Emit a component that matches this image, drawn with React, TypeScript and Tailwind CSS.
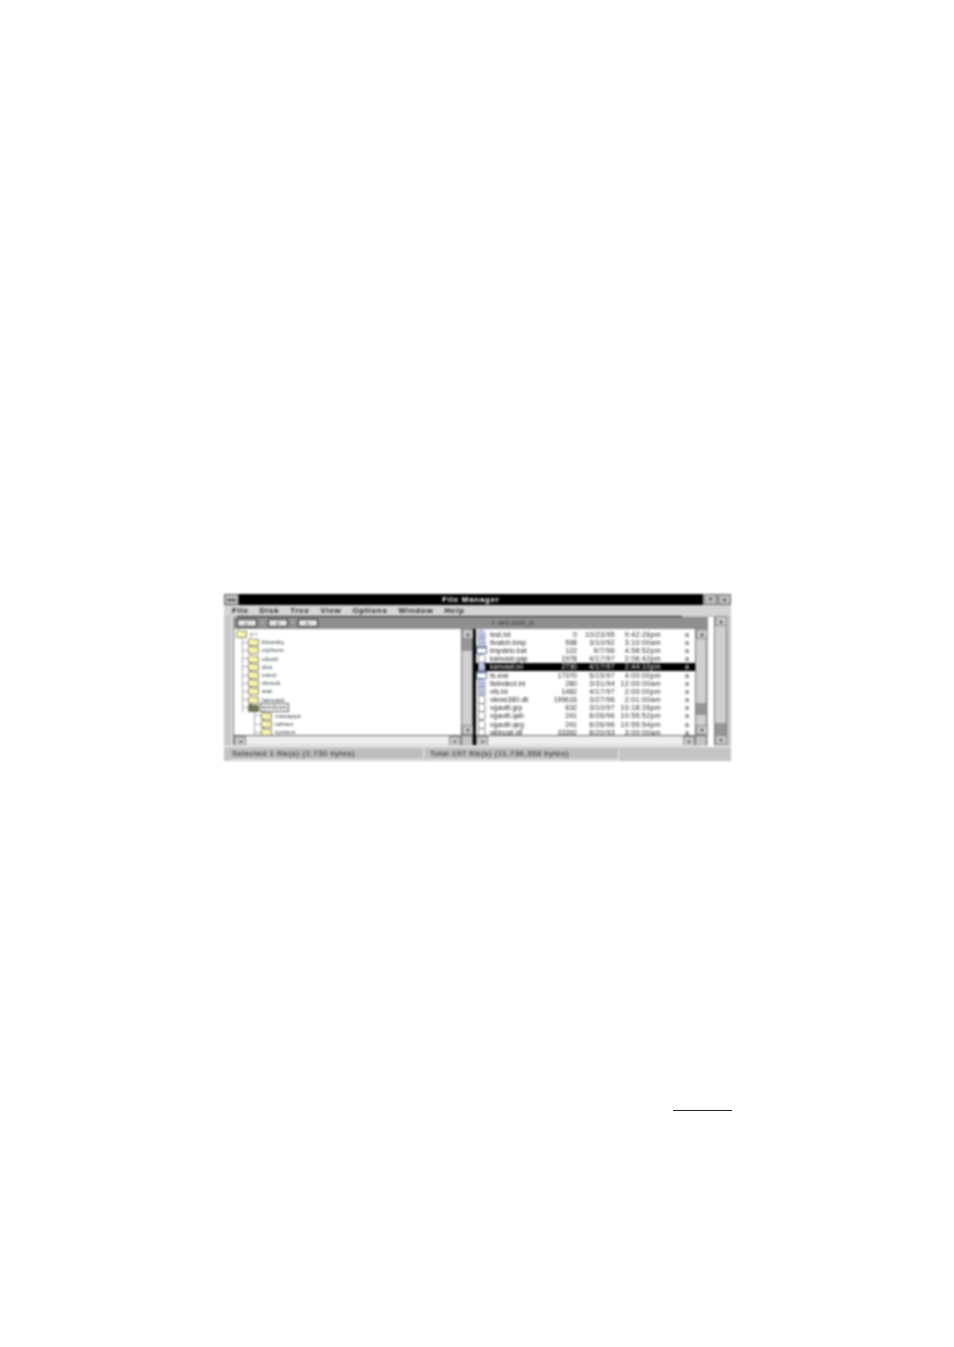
import React from 'react';

const treeRows = [
  { name: 'c:\\', level: 0 },
  { name: 'bluesky', level: 1 },
  { name: 'ciphure', level: 1 },
  { name: 'ubutil', level: 1 },
  { name: 'dos', level: 1 },
  { name: 'ntext', level: 1 },
  { name: 'rbreck', level: 1 },
  { name: 'war', level: 1 },
  { name: 'lamcast', level: 1 },
  { name: 'windows', level: 1, open: true },
  { name: 'mssapps', level: 2 },
  { name: 'rahtex', level: 2 },
  { name: 'system', level: 2 },
];

const fileRows = [
  { icon: 'doc', name: 'test.txt', size: '0', date: '10/23/95', time: '9:42:26pm' },
  { icon: 'doc', name: 'ttvatch.bmp', size: '598', date: '3/10/92', time: '3:10:00am' },
  { icon: 'exe', name: 'tmpdelo.bat', size: '122', date: '9/7/96', time: '4:58:52pm' },
  { icon: 'file', name: 'kanvast.gap', size: '1978', date: '4/17/97', time: '2:06:42pm' },
  { icon: 'doc', name: 'kanvast.ini', size: '2730', date: '4/17/97', time: '2:44:10pm', selected: true },
  { icon: 'exe', name: 'ts.exe', size: '17370', date: '5/15/97', time: '4:00:00pm' },
  { icon: 'doc', name: 'tteindect.ini', size: '280', date: '3/31/94', time: '12:00:00am' },
  { icon: 'doc', name: 'vfs.ini', size: '1482', date: '4/17/97', time: '2:00:00pm' },
  { icon: 'file', name: 'vlews360.dll', size: '199616', date: '3/27/96', time: '2:01:00am' },
  { icon: 'file', name: 'vgautil.grp', size: '632', date: '3/10/97', time: '10:18:26pm' },
  { icon: 'file', name: 'vgautil.qab', size: '241', date: '6/26/96', time: '10:55:52pm' },
  { icon: 'file', name: 'vgautil.qeg', size: '241', date: '6/26/96', time: '10:55:54pm' },
  { icon: 'file', name: 'wbbcall.dll', size: '33392', date: '8/20/93', time: '3:00:00am' },
];

const menus = ['File', 'Disk', 'Tree', 'View', 'Options', 'Window', 'Help'];

const Folder = ({ open }: { open?: boolean }) => (
  <svg width="11" height="8" viewBox="0 0 11 8" className="shrink-0">
    <path d="M0.5 7.5V1.5L1.5 .5H4L5 1.5H10.5V7.5Z" fill={open ? '#6f7350' : '#f8f6b0'} stroke="#55553a" strokeWidth="0.7" />
  </svg>
);

const FileIcon = ({ kind }: { kind: string }) => {
  if (kind === 'exe') {
    return (
      <svg width="11" height="8" viewBox="0 0 11 8" className="shrink-0">
        <rect x="0.5" y="0.5" width="10" height="7" fill="#fff" stroke="#5a6a8a" />
        <rect x="0.5" y="0.5" width="10" height="2" fill="#7c8db0" />
      </svg>
    );
  }
  return (
    <svg width="11" height="9" viewBox="0 0 11 9" className="shrink-0">
      <path d="M2.5 .5H7L9 2.5V8.5H2.5Z" fill={kind === 'doc' ? '#dfe4f2' : '#fff'} stroke={kind === 'doc' ? '#5a6a9a' : '#666'} strokeWidth="0.8" />
      {kind === 'doc' && <path d="M4 3.5H7.5M4 5H7.5M4 6.5H7.5" stroke="#5a6a9a" strokeWidth="0.6" />}
    </svg>
  );
};

const Arrow = ({ dir }: { dir: 'up' | 'down' | 'left' | 'right' }) => {
  const glyph = { up: '▲', down: '▼', left: '◂', right: '▸' }[dir];
  return (
    <div className="w-[12px] h-[10px] shrink-0 flex items-center justify-center bg-[#c6c6c6] border border-[#8c8c8c] text-[5px] leading-none text-[#222]">
      {glyph}
    </div>
  );
};

const VScroll = ({ thumbTop, className, corner }: { thumbTop: number; className: string; corner?: boolean }) => (
  <div className={`flex flex-col shrink-0 bg-[#d0d0d0] border-x border-[#777] ${className}`}>
    <Arrow dir="up" />
    <div className="flex-1 flex flex-col">
      <div style={{ height: thumbTop }} />
      <div className="h-[12px] bg-[#969696]" />
    </div>
    <Arrow dir="down" />
    {corner && <div className="h-[10px] shrink-0 bg-[#c4c4c4] border-t border-[#666]" />}
  </div>
);

const HScroll = () => (
  <div className="h-[10px] flex items-stretch bg-[#eeeeee] border-t border-[#666]">
    <Arrow dir="left" />
    <div className="flex-1" />
    <Arrow dir="right" />
  </div>
);

const Toolbox = ({ label }: { label: string }) => (
  <div className="h-[8px] w-[20px] border border-[#333] bg-[#e2e2e2] text-[5px] leading-[6px] text-center text-[#333]">
    {label}
  </div>
);

export default function App() {
  return (
    <div className="w-[954px] h-[1347px] bg-white overflow-hidden pt-[594px] pl-[224px] font-['Liberation_Sans',Arial,sans-serif]">
      <div className="w-[507px] h-[167px] bg-[#c4c4c4] flex flex-col blur-[0.8px] text-[#333]">
        {/* title bar */}
        <div className="h-[11px] flex shrink-0 items-stretch">
          <div className="w-[15px] bg-[#bdbdbd] border border-[#555] flex items-center justify-center">
            <div className="w-[9px] h-[2px] bg-white border-y border-[#555]" />
          </div>
          <div className="flex-1 bg-black text-white text-[8px] font-bold leading-[11px] text-center tracking-[0.7px]">
            File Manager
          </div>
          <div className="w-[13px] ml-[1px] bg-[#bdbdbd] border border-[#666] text-[6px] leading-[9px] text-center text-[#222]">▾</div>
          <div className="w-[13px] ml-[1px] bg-[#bdbdbd] border border-[#666] text-[6px] leading-[9px] text-center text-[#222]">▴</div>
        </div>

        {/* menu */}
        <div className="h-[11px] shrink-0 flex items-center pl-[8px] gap-[11px] bg-[#d4d4d4] text-[8px] font-bold tracking-[0.7px] text-[#222]">
          {menus.map((m) => (
            <span key={m}>{m}</span>
          ))}
        </div>
        <div className="h-[1px] shrink-0 ml-[13px] mr-[49px] bg-[#222]" />

        <div className="flex-1 flex min-h-0">
          <div className="w-[9px] shrink-0 bg-[#c8c8c8] border-r border-white" />

          {/* child window */}
          <div className="flex-1 flex flex-col min-w-0">
            <div className="h-[12px] shrink-0 w-[475px] flex items-center pl-[4px] bg-[#8f8f8f]">
              <Toolbox label="c:" />
              <span className="w-[11px] text-center text-[5px] text-[#ddd]">a</span>
              <Toolbox label="d:" />
              <span className="w-[10px] text-center text-[5px] text-[#ddd]">b</span>
              <Toolbox label="e:" />
              <span className="ml-[174px] text-[6px] text-[#222] tracking-[0.3px]">f: \MS-DOS_6\</span>
            </div>

            <div className="flex h-[116px] w-[475px]">
              {/* tree */}
              <div className="w-[228px] shrink-0 bg-white flex flex-col overflow-hidden border-l border-[#666]">
                <div className="flex-1 overflow-hidden pt-[1px] pl-[2px]">
                  {treeRows.map((r) => (
                    <div key={r.name} className="h-[8.2px] flex items-center text-[6px] leading-none tracking-[0.3px] text-[#222]">
                      {r.level === 1 && (
                        <div className="w-[12px] h-full shrink-0 pl-[6px]">
                          <div className="h-full flex items-center border-l border-[#aaa]">
                            <div className="w-full h-[1px] bg-[#aaa]" />
                          </div>
                        </div>
                      )}
                      {r.level === 2 && (
                        <div className="w-[25px] h-full shrink-0 pl-[18px]">
                          <div className="h-full flex items-center border-l border-[#aaa]">
                            <div className="w-full h-[1px] bg-[#aaa]" />
                          </div>
                        </div>
                      )}
                      <Folder open={r.open} />
                      <span className={r.open ? 'ml-[1px] px-[1px] border border-[#555] leading-[7px]' : 'ml-[3px]'}>{r.name}</span>
                    </div>
                  ))}
                </div>
                <HScroll />
              </div>
              <VScroll className="w-[12px]" thumbTop={0} corner />
              <div className="w-[3px] shrink-0 bg-black" />

              {/* file list */}
              <div className="w-[219px] shrink-0 bg-white flex flex-col overflow-hidden">
                <div className="flex-1 overflow-hidden pt-[1px]">
                  {fileRows.map((f) => (
                    <div
                      key={f.name}
                      className={`h-[8.2px] flex items-center text-[7px] leading-none ${f.selected ? 'bg-black text-white' : 'text-[#222]'}`}
                    >
                      <FileIcon kind={f.icon} />
                      <span className="w-[60px] ml-[3px] whitespace-nowrap">{f.name}</span>
                      <span className="w-[27px] text-right">{f.size}</span>
                      <span className="w-[38px] text-right tracking-[0.35px]">{f.date}</span>
                      <span className="w-[46px] text-right tracking-[0.35px]">{f.time}</span>
                      <span className="ml-[24px]">a</span>
                    </div>
                  ))}
                </div>
                <HScroll />
              </div>
              <VScroll className="w-[12px]" thumbTop={64} corner />
            </div>
          </div>

          {/* main window scrollbar */}
          <div className="w-[6px] shrink-0 bg-white" />
          <VScroll className="w-[13px] mt-[-1px] mb-[1px]" thumbTop={97} />
          <div className="w-[4px] shrink-0 bg-[#c4c4c4]" />
        </div>

        {/* status bar */}
        <div className="h-[15px] shrink-0 flex items-center gap-[3px] pl-[6px] bg-[#c4c4c4] border-t border-white text-[8px] tracking-[0.45px] text-[#222]">
          <div className="w-[194px] h-[11px] leading-[10px] pl-[2px] border-r border-b border-[#eee] border-t-[#666] border-l-[#666] bg-[#bdbdbd] whitespace-nowrap">
            Selected 1 file(s) (2,730 bytes)
          </div>
          <div className="w-[192px] h-[11px] leading-[10px] pl-[3px] border-r border-b border-[#eee] border-t-[#666] border-l-[#666] bg-[#bdbdbd] whitespace-nowrap">
            Total 197 file(s) (11,736,358 bytes)
          </div>
        </div>
      </div>

      <div className="w-[59px] h-[1px] mt-[349px] ml-[449px] bg-[#222]" />
    </div>
  );
}
